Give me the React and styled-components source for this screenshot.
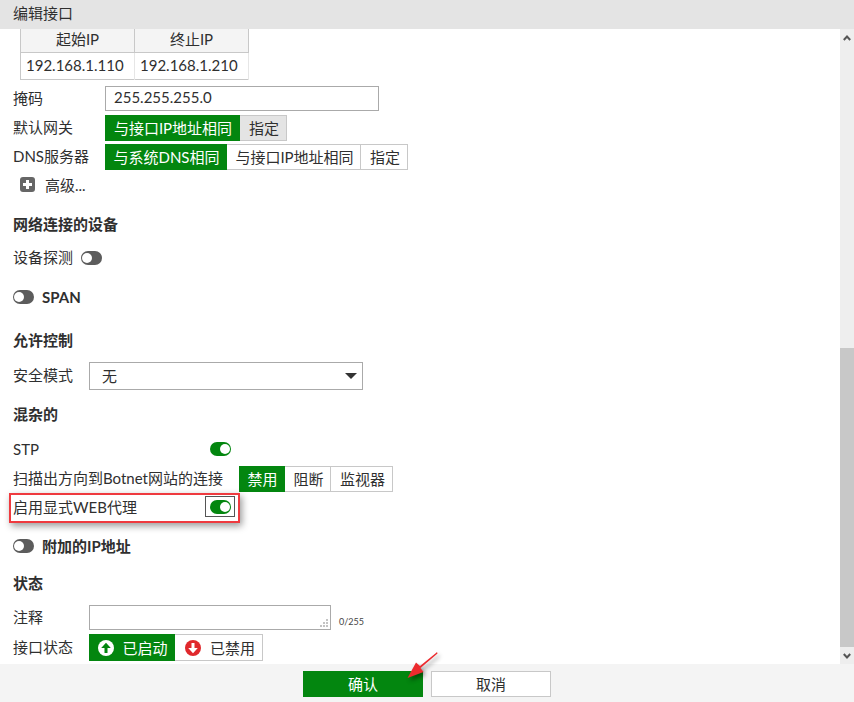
import React from 'react';
import styled, { createGlobalStyle } from 'styled-components';

const GREEN = '#03860f';

const Global = createGlobalStyle`
  html, body {
    margin: 0;
    padding: 0;
    overflow: hidden;
    background: #fff;
  }
  * {
    box-sizing: border-box;
  }
`;

const Page = styled.div`
  position: relative;
  width: 854px;
  height: 702px;
  display: flex;
  flex-direction: column;
  overflow: hidden;
  font-family: Lato, 'Noto Sans CJK SC', sans-serif;
  font-size: 15px;
  color: #2f2f2f;
`;

const Header = styled.div`
  height: 29px;
  line-height: 27px;
  padding-left: 13px;
  background: #e4e4e4;
  flex: none;
`;

const Body = styled.div`
  flex: 1;
  display: flex;
  min-height: 0;
`;

const Main = styled.div`
  flex: 1;
  overflow: hidden;
  padding-left: 13px;
`;

const Scrollbar = styled.div`
  width: 14px;
  display: flex;
  flex-direction: column;
  background: #eeeeee;
`;

const ScrollArrow = styled.div`
  height: 17px;
  flex: none;
  display: flex;
  align-items: center;
  justify-content: center;
`;

const ScrollSpace = styled.div`
  flex: 1;
`;

const ScrollThumb = styled.div`
  height: 299px;
  background: #c8c8c8;
  flex: none;
`;

const Table = styled.table`
  margin-left: 7px;
  width: 229px;
  border-collapse: collapse;
  table-layout: fixed;
  border: 1px solid #c8c8c8;
  border-top: 0;
`;

const HeadCell = styled.th`
  height: 23px;
  padding: 0 0 2px;
  font-weight: 400;
  text-align: center;
  background: #f4f4f4;
  border-right: 1px solid #c8c8c8;
  border-bottom: 1px solid #c8c8c8;
  line-height: 20px;
`;

const Cell = styled.td`
  height: 27px;
  padding: 0 0 2px 5px;
  text-align: left;
  border-right: 1px solid #e6e6e6;
`;

const Row = styled.div`
  display: flex;
  align-items: center;
  margin-top: ${p => p.$top}px;
  height: ${p => p.$h || 20}px;
`;

const Label = styled.div`
  width: ${p => p.$w}px;
  flex: none;
  padding-bottom: ${p => (p.$low ? 0 : 2)}px;
  white-space: nowrap;
`;

const SectionTitle = styled.div`
  height: 20px;
  line-height: 19px;
  margin-top: ${p => p.$top}px;
  font-weight: 700;
  font-size: 15px;
`;

const BoldLabel = styled.span`
  font-weight: 700;
  font-size: 15px;
  margin-left: 8px;
`;

const TextInput = styled.div`
  width: 274px;
  height: 25px;
  line-height: 21px;
  padding-left: 8px;
  border: 1px solid #aaa;
`;

const Segments = styled.div`
  display: flex;
  height: ${p => p.$h || 26}px;
`;

const Segment = styled.div`
  display: flex;
  align-items: center;
  justify-content: center;
  gap: ${p => p.$gap || 0}px;
  width: ${p => p.$w}px;
  height: 100%;
  padding-left: ${p => (p.$first ? 1 : 2)}px;
  white-space: nowrap;
  background: ${p => (p.$on ? GREEN : p.$grey ? '#e4e4e4' : '#fff')};
  color: ${p => (p.$on ? '#fff' : '#2f2f2f')};
  border: 1px solid ${p => (p.$on ? GREEN : '#c8c8c8')};
  border-left-width: ${p => (p.$first ? 1 : 0)}px;
`;

const Advanced = styled.div`
  display: flex;
  align-items: center;
  gap: 10px;
  padding-left: 7px;
`;

const PlusBox = styled.span`
  position: relative;
  width: 15px;
  height: 15px;
  border-radius: 3px;
  background: #666;
  &::before,
  &::after {
    content: '';
    position: absolute;
    background: #fff;
  }
  &::before {
    left: 3px;
    right: 3px;
    top: 6px;
    height: 3px;
  }
  &::after {
    top: 3px;
    bottom: 3px;
    left: 6px;
    width: 3px;
  }
`;

const Toggle = styled.span`
  position: relative;
  display: inline-block;
  flex: none;
  width: 21px;
  height: 14px;
  border-radius: 7px;
  background: ${p => (p.$on ? GREEN : '#5c5c5c')};
  &::after {
    content: '';
    position: absolute;
    top: 2px;
    left: ${p => (p.$on ? 10 : 1)}px;
    width: 10px;
    height: 10px;
    border-radius: 50%;
    background: #fff;
  }
`;

const ToggleFocus = styled.span`
  display: flex;
  align-items: center;
  justify-content: center;
  width: 30px;
  height: 21px;
  margin-left: -5px;
  border: 1px solid #555;
`;

const Select = styled.div`
  width: 274px;
  height: 28px;
  padding: 0 5px 0 12px;
  display: flex;
  align-items: center;
  justify-content: space-between;
  border: 1px solid #aaa;
`;

const Caret = styled.span`
  width: 0;
  height: 0;
  border-left: 6px solid transparent;
  border-right: 6px solid transparent;
  border-top: 6px solid #333;
`;

const Highlight = styled.div`
  position: absolute;
  left: 9px;
  top: 493px;
  width: 231px;
  height: 30px;
  border: 2px solid #ef3a3f;
  box-shadow: 2px 3px 7px rgba(0, 0, 0, 0.4);
  pointer-events: none;
`;

const Textarea = styled.div`
  position: relative;
  width: 242px;
  height: 25px;
  border: 1px solid #aaa;
`;

const Grip = styled.svg`
  position: absolute;
  right: 2px;
  bottom: 2px;
`;

const Counter = styled.span`
  margin-left: 8px;
  margin-top: 9px;
  font-size: 9px;
  color: #444;
`;

const StateIcon = styled.svg`
  flex: none;
  margin: 1px 0 0 1px;
`;

const Footer = styled.div`
  height: 38px;
  flex: none;
  display: flex;
  justify-content: center;
  gap: 8px;
  padding-top: 7px;
  background: #f4f4f4;
`;

const FootButton = styled.div`
  width: 120px;
  height: 26px;
  line-height: 24px;
  text-align: center;
  background: ${p => (p.$primary ? GREEN : '#fff')};
  color: ${p => (p.$primary ? '#fff' : '#2f2f2f')};
  border: 1px solid ${p => (p.$primary ? GREEN : '#c8c8c8')};
`;

const ArrowMark = styled.svg`
  position: absolute;
  left: 400px;
  top: 648px;
  filter: drop-shadow(2px 3px 2px rgba(0, 0, 0, 0.45));
  pointer-events: none;
`;

function UpIcon() {
  return (
    <StateIcon width="16" height="16" viewBox="0 0 16 16">
      <circle cx="8" cy="8" r="8" fill="#fff" />
      <path d="M8 2.8 L12.8 8 H9.5 V13 H6.5 V8 H3.2 Z" fill={GREEN} />
    </StateIcon>
  );
}

function DownIcon() {
  return (
    <StateIcon width="16" height="16" viewBox="0 0 16 16">
      <circle cx="8" cy="8" r="8" fill="#e0282c" />
      <path d="M8 13.2 L3.2 8 H6.5 V3 H9.5 V8 H12.8 Z" fill="#fff" />
    </StateIcon>
  );
}

function Chevron({ up }) {
  return (
    <svg width="8" height="6" viewBox="0 0 8 6">
      <path d={up ? 'M0.8 5 L4 1.5 L7.2 5' : 'M0.8 1 L4 4.5 L7.2 1'} fill="none" stroke="#555" strokeWidth="2" />
    </svg>
  );
}

export default function App() {
  return (
    <Page>
      <Global />
      <Header>编辑接口</Header>
      <Body>
        <Main>
          <Table>
            <thead>
              <tr>
                <HeadCell>起始IP</HeadCell>
                <HeadCell>终止IP</HeadCell>
              </tr>
            </thead>
            <tbody>
              <tr>
                <Cell>192.168.1.110</Cell>
                <Cell>192.168.1.210</Cell>
              </tr>
            </tbody>
          </Table>

          <Row $top={6} $h={25}>
            <Label $w={92}>掩码</Label>
            <TextInput>255.255.255.0</TextInput>
          </Row>
          <Row $top={4} $h={26}>
            <Label $w={92}>默认网关</Label>
            <Segments>
              <Segment $on $first $w={135}>与接口IP地址相同</Segment>
              <Segment $grey $w={47}>指定</Segment>
            </Segments>
          </Row>
          <Row $top={3} $h={26}>
            <Label $w={92}>DNS服务器</Label>
            <Segments>
              <Segment $on $first $w={122}>与系统DNS相同</Segment>
              <Segment $w={134}>与接口IP地址相同</Segment>
              <Segment $w={47}>指定</Segment>
            </Segments>
          </Row>
          <Row $top={5}>
            <Advanced>
              <PlusBox />
              高级...
            </Advanced>
          </Row>

          <SectionTitle $top={20}>网络连接的设备</SectionTitle>
          <Row $top={13}>
            <Label $w={68}>设备探测</Label>
            <Toggle />
          </Row>
          <Row $top={19}>
            <Toggle />
            <BoldLabel>SPAN</BoldLabel>
          </Row>

          <SectionTitle $top={24}>允许控制</SectionTitle>
          <Row $top={11} $h={28}>
            <Label $w={76}>安全模式</Label>
            <Select>
              无
              <Caret />
            </Select>
          </Row>

          <SectionTitle $top={15}>混杂的</SectionTitle>
          <Row $top={14}>
            <Label $low $w={197}>STP</Label>
            <Toggle $on />
          </Row>
          <Row $top={7} $h={26}>
            <Label $w={226}>扫描出方向到Botnet网站的连接</Label>
            <Segments>
              <Segment $on $first $w={46}>禁用</Segment>
              <Segment $w={46}>阻断</Segment>
              <Segment $w={62}>监视器</Segment>
            </Segments>
          </Row>
          <Row $top={5}>
            <Label $low $w={197}>启用显式WEB代理</Label>
            <ToggleFocus>
              <Toggle $on />
            </ToggleFocus>
          </Row>
          <Row $top={19}>
            <Toggle />
            <BoldLabel>附加的IP地址</BoldLabel>
          </Row>

          <SectionTitle $top={18}>状态</SectionTitle>
          <Row $top={11} $h={25}>
            <Label $w={76}>注释</Label>
            <Textarea>
              <Grip width="8" height="8" viewBox="0 0 8 8">
                <path d="M6 0h2v2H6zM3 3h2v2H3zM6 3h2v2H6zM0 6h2v2H0zM3 6h2v2H3zM6 6h2v2H6z" fill="#c4c4c4" />
              </Grip>
            </Textarea>
            <Counter>0/255</Counter>
          </Row>
          <Row $top={4} $h={27}>
            <Label $w={76}>接口状态</Label>
            <Segments $h={27}>
              <Segment $on $first $w={86} $gap={8}><UpIcon />已启动</Segment>
              <Segment $w={88} $gap={9}><DownIcon />已禁用</Segment>
            </Segments>
          </Row>
        </Main>
        <Scrollbar>
          <ScrollArrow><Chevron up /></ScrollArrow>
          <ScrollSpace />
          <ScrollThumb />
          <ScrollArrow><Chevron /></ScrollArrow>
        </Scrollbar>
      </Body>
      <Footer>
        <FootButton $primary>确认</FootButton>
        <FootButton>取消</FootButton>
      </Footer>
      <Highlight />
      <ArrowMark width="44" height="40" viewBox="0 0 44 40">
        <path d="M37 4 L36 5 L20 18 L16 14.5 L7.5 30 L23.5 24 L20.5 20 L37.5 5.5 Z" fill="#ec2a2e" />
      </ArrowMark>
    </Page>
  );
}
